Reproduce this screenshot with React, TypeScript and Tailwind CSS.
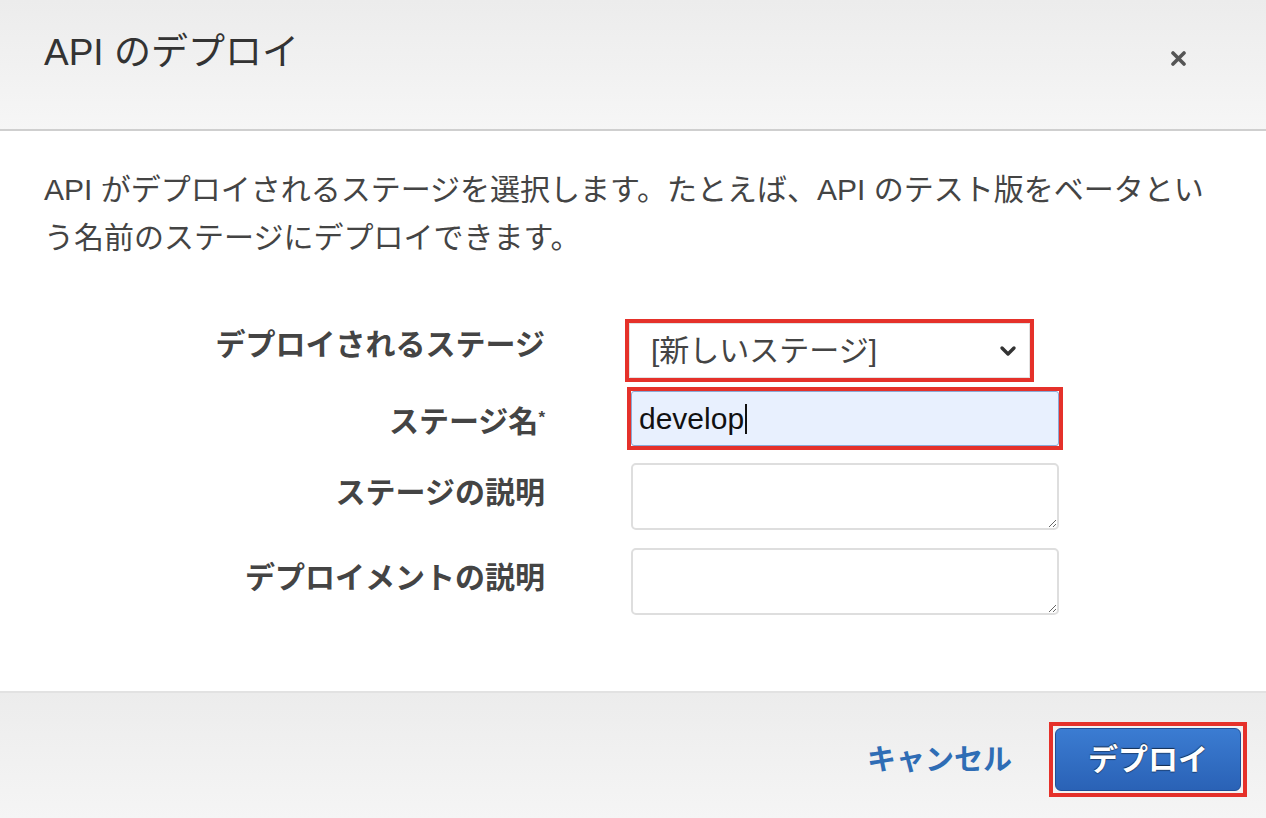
import React from "react";

const FONT = { fontFamily: '"Liberation Sans", "Noto Sans CJK JP", sans-serif' };

export default function App() {
  return (
    <div
      className="w-[1266px] h-[818px] flex flex-col bg-white overflow-hidden text-[#444]"
      style={FONT}
    >
      {/* Header */}
      <div className="h-[131px] shrink-0 flex items-start justify-between bg-gradient-to-b from-[#ececec] to-[#f6f6f6] border-b-2 border-[#cfcfcf]">
        <h1 className="ml-[44px] mt-[31px] text-[37px] leading-[44px] text-[#333] font-normal">
          API のデプロイ
        </h1>
        <button className="mr-[80px] mt-[51px] w-[15px] h-[15px] flex items-center justify-center">
          <svg width="15" height="15" viewBox="0 0 15 15">
            <path d="M2 2 L13 13 M13 2 L2 13" stroke="#555" strokeWidth="3.6" strokeLinecap="round" />
          </svg>
        </button>
      </div>

      {/* Body */}
      <div className="flex-1 flex flex-col pt-[35px]">
        <p className="ml-[44px] mr-[40px] text-[30px] leading-[48px] text-[#444]">
          API がデプロイされるステージを選択します。たとえば、API のテスト版をベータとい
          <br />
          う名前のステージにデプロイできます。
        </p>

        {/* Row 1 */}
        <div className="flex mt-[57px] h-[63px]">
          <div className="w-[545px] shrink-0 text-right font-bold text-[30px] leading-[40px] pt-[6px] text-[#444]">
            デプロイされるステージ
          </div>
          <div className="ml-[80px] w-[409px] h-[63px] border-[4px] border-[#e5312a] bg-white flex">
            <div className="flex-1 flex items-center justify-between pl-[21px] pr-[11px] border border-[#e2e2e2]">
              <span className="text-[30px] leading-[40px] text-[#444]">[新しいステージ]</span>
              <svg width="20" height="14" viewBox="0 0 20 14">
                <path d="M4 4 L10 10 L16 4" fill="none" stroke="#333" strokeWidth="3.4" strokeLinecap="round" strokeLinejoin="round" />
              </svg>
            </div>
          </div>
        </div>

        {/* Row 2 */}
        <div className="flex mt-[5px] h-[63px]">
          <div className="w-[545px] shrink-0 text-right font-bold text-[30px] leading-[40px] pt-[15px] text-[#444]">
            ステージ名<span className="text-[17px] align-top relative top-[-4px]">*</span>
          </div>
          <div className="ml-[82px] w-[436px] h-[63px] border-[4px] border-[#e5312a] flex">
            <div className="flex-1 flex items-center pl-[7px] bg-[#e8f0fe] border border-[#8aa9d6] rounded-[3px]">
              <span className="text-[30px] leading-[40px] text-[#111]">develop</span>
              <span className="w-[1.5px] h-[30px] bg-[#111] ml-[1px]" />
            </div>
          </div>
        </div>

        {/* Row 3 */}
        <div className="flex mt-[13px] h-[67px]">
          <div className="w-[545px] shrink-0 text-right font-bold text-[30px] leading-[40px] pt-[10px] text-[#444]">
            ステージの説明
          </div>
          <textarea className="ml-[86px] w-[428px] h-[67px] border-2 border-[#dedede] rounded-[5px] bg-white outline-none" />
        </div>

        {/* Row 4 */}
        <div className="flex mt-[18px] h-[67px]">
          <div className="w-[545px] shrink-0 text-right font-bold text-[30px] leading-[40px] pt-[10px] text-[#444]">
            デプロイメントの説明
          </div>
          <textarea className="ml-[86px] w-[428px] h-[67px] border-2 border-[#dedede] rounded-[5px] bg-white outline-none" />
        </div>
      </div>

      {/* Footer */}
      <div className="h-[127px] shrink-0 border-t-2 border-[#e2e2e2] bg-gradient-to-b from-[#ececec] to-[#f5f5f5] flex items-start justify-end pt-[29px] pr-[19px]">
        <span className="mt-[18px] text-[29px] leading-[40px] font-bold text-[#2f6db5]">キャンセル</span>
        <div className="ml-[37px] w-[198px] h-[75px] border-[4px] border-[#e5312a] p-[2px] bg-[#f3f3f3]">
          <div className="w-full h-full rounded-[6px] border border-[#1f4e96] bg-gradient-to-b from-[#3b7cd2] to-[#2a62b6] flex items-center justify-center">
            <span
              className="text-[30px] leading-[40px] font-bold text-white"
              style={{ textShadow: "0 -1px 1px rgba(0,0,0,0.6), 0 1px 1px rgba(0,0,0,0.4)" }}
            >
              デプロイ
            </span>
          </div>
        </div>
      </div>
    </div>
  );
}
